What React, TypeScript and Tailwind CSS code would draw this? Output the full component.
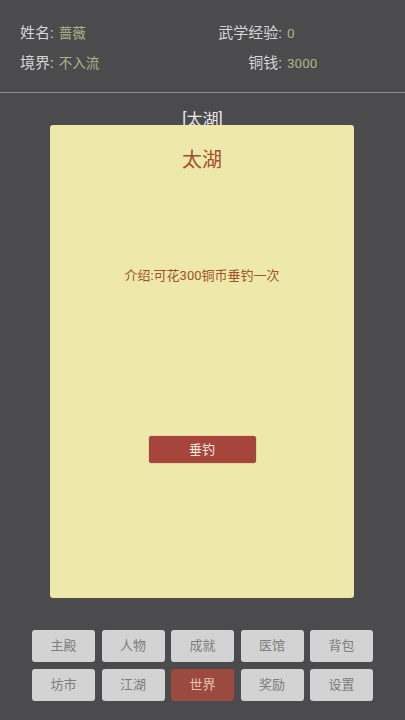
const navRows = [
  ['主殿', '人物', '成就', '医馆', '背包'],
  ['坊市', '江湖', '世界', '奖励', '设置'],
]

function Stat({ label, value, labelClass }: { label: string; value: string; labelClass?: string }) {
  return (
    <div className="flex items-baseline">
      <span className={`text-[15px] text-[#d6d6d6] ${labelClass ?? ''}`}>{label}:</span>
      <span className="ml-[5px] text-[13.5px] text-[#b0b28a]">{value}</span>
    </div>
  )
}

function App() {
  return (
    <div
      className="relative flex h-[720px] w-[405px] flex-col overflow-hidden bg-[#4b4a4c]"
      style={{ fontFamily: 'Roboto, "Noto Sans CJK SC", sans-serif' }}
    >
      {/* player info */}
      <div className="grid h-[92px] grid-cols-[195px_1fr] content-center gap-y-[8px] pl-5 pt-[4px]">
        <Stat label="姓名" value="蔷薇" />
        <Stat label="武学经验" value="0" labelClass="w-[67px] text-right" />
        <Stat label="境界" value="不入流" />
        <Stat label="铜钱" value="3000" labelClass="w-[67px] text-right" />
      </div>
      <div className="h-px bg-[#8c8c8c]" />

      <div className="mt-[17px] text-center text-[16px] leading-5 text-[#e8e8e8]">[太湖]</div>
      <div className="flex-1" />

      {/* bottom nav */}
      <div className="mb-[19px] flex flex-col items-center gap-[7px]">
        {navRows.map((row, i) => (
          <div key={i} className="flex gap-[6.5px]">
            {row.map((name) => (
              <button
                key={name}
                className={`h-[32px] w-[63px] rounded-[3px] text-[13px] ${
                  name === '世界' ? 'bg-[#9b4a40] text-[#e6c2b4]' : 'bg-[#d3d3d3] text-[#7d7d7d]'
                }`}
              >
                {name}
              </button>
            ))}
          </div>
        ))}
      </div>

      {/* location dialog */}
      <div className="absolute left-[50px] top-[125px] flex h-[473px] w-[304px] flex-col items-center rounded-[3px] bg-[#eee8aa]">
        <div className="mt-[23px] text-[20px] leading-6 text-[#a0522d]">太湖</div>
        <div className="mt-[94px] text-[13px] leading-5 text-[#a0522d]">介绍:可花300铜币垂钓一次</div>
        <button className="mt-[150px] h-[27px] w-[107px] rounded-[3px] bg-[#a5453b] text-[13px] text-[#f4e6e0] shadow-[0_0_1px_#7a3028]">
          垂钓
        </button>
      </div>
    </div>
  )
}

export default App
